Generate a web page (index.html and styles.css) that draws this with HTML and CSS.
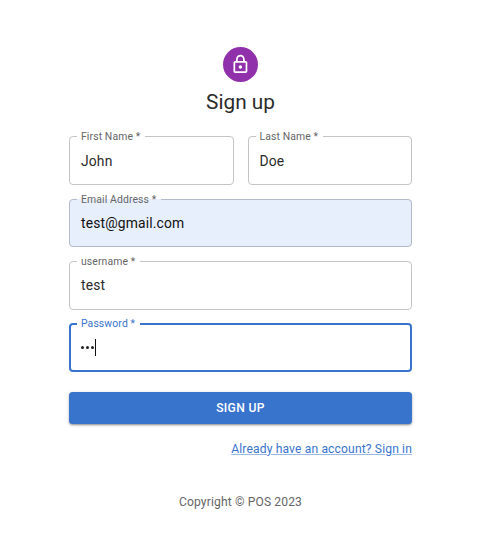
FILE: index.html
```html
<!DOCTYPE html>
<html lang="en">
<head>
<meta charset="utf-8">
<title>Sign up</title>
<link rel="stylesheet" href="styles.css">
</head>
<body>
<main class="signup">
  <div class="avatar">
    <svg class="lock" viewBox="0 0 24 24" fill="currentColor"><path d="M12 17c1.1 0 2-.9 2-2s-.9-2-2-2-2 .9-2 2 .9 2 2 2zm6-9h-1V6c0-2.760-2.240-5-5-5S7 3.240 7 6v2H6c-1.100 0-2 .9-2 2v10c0 1.100.9 2 2 2h12c1.100 0 2-.9 2-2V10c0-1.100-.9-2-2-2zM8.900 6c0-1.710 1.390-3.100 3.100-3.100s3.100 1.390 3.100 3.100v2H8.900V6zM18 20H6V10h12v10z"/></svg>
  </div>
  <h1 class="title">Sign up</h1>
  <form class="fields">
    <div class="names">
      <fieldset class="field"><legend>First Name *</legend><div class="value">John</div></fieldset>
      <fieldset class="field"><legend>Last Name *</legend><div class="value">Doe</div></fieldset>
    </div>
    <fieldset class="field filled"><legend>Email Address *</legend><div class="value">test@gmail.com</div></fieldset>
    <fieldset class="field"><legend>username *</legend><div class="value">test</div></fieldset>
    <fieldset class="field focused"><legend>Password *</legend><div class="value"><span class="dots"><i></i><i></i><i></i></span><span class="caret"></span></div></fieldset>
  </form>
  <button class="submit" type="button">SIGN UP</button>
  <a class="signin" href="#">Already have an account? Sign in</a>
  <footer class="copyright">Copyright © POS 2023</footer>
</main>
</body>
</html>
```
FILE: styles.css
```css
* { box-sizing: border-box; }
body {
  margin: 0;
  background: #fff;
  color: #2b2b2b;
  font-family: Roboto, "Liberation Sans", sans-serif;
}
.signup {
  width: 343px;
  margin: 0 auto 0 69px;
  padding-top: 47px;
  display: flex;
  flex-direction: column;
}
.avatar {
  width: 35px;
  height: 35px;
  align-self: center;
  border-radius: 50%;
  background: #9030ab;
  color: #fff;
  display: grid;
  place-items: center;
}
.lock { width: 20.800px; height: 20.800px; }
.title {
  margin: 6px 0 0;
  font-size: 20.800px;
  line-height: 28px;
  font-weight: 400;
  text-align: center;
}
.fields {
  margin-top: 14px;
  display: flex;
  flex-direction: column;
  gap: 7.300px;
}
.names {
  display: grid;
  grid-template-columns: 1fr 1fr;
  gap: 14px;
}
.field {
  min-width: 0;
  height: 55px;
  margin: 0;
  padding: 0 12px 0 7px;
  border: 1px solid #c4c4c4;
  border-radius: 4px;
}
.field legend {
  height: 13px;
  padding: 0 4.500px 0 4px;
  color: #666;
  font-size: 10.400px;
  line-height: 13px;
  letter-spacing: 0.120px;
  white-space: nowrap;
}
.value {
  height: 35px;
  padding-left: 4px;
  display: flex;
  align-items: center;
  font-size: 13.860px;
  letter-spacing: 0.150px;
}
.filled {
  height: 54.300px;
  margin-top: 0.700px;
  background: #e8effc;
  border-color: #b4bbc8;
}
.filled .value { height: 34px; color: #111; }
.focused { border: 2px solid #3974cc; padding-left: 6px; }
.focused legend { color: #3974cc; height: 14px; }
.focused .value { height: 33px; }
.dots { display: flex; gap: 2px; margin-right: 1px; }
.dots i {
  width: 3px;
  height: 3px;
  border-radius: 50%;
  background: #222;
}
.caret { width: 1px; height: 17px; background: #111; }
.submit {
  height: 32px;
  margin: 20px 0 0;
  padding: 0;
  border: 0;
  border-radius: 3.500px;
  background: #3974cc;
  color: #fff;
  font: 500 12.100px/32px Roboto, sans-serif;
  letter-spacing: 0.350px;
  box-shadow: 0 2px 2px -1px #0003, 0 1px 2px #0003, 0 1px 4px #0002;
}
.signin {
  margin-top: 17px;
  align-self: flex-end;
  color: #3974cc;
  font-size: 12.100px;
  line-height: 17px;
  letter-spacing: 0.140px;
  text-decoration-color: #3974cc80;
}
.copyright {
  margin-top: 36px;
  color: #666;
  font-size: 12.100px;
  line-height: 17px;
  letter-spacing: 0.130px;
  text-align: center;
}
```
